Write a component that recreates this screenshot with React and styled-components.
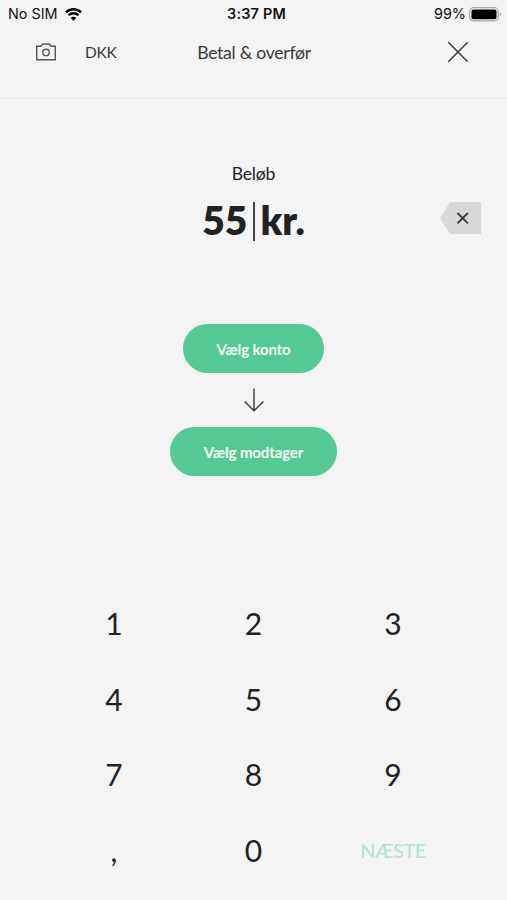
import React from "react";
import styled, { createGlobalStyle } from "styled-components";

const colors = {
  background: "#f4f4f4",
  text: "#222222",
  icon: "#3a3a3a",
  green: "#56c896",
  greenFaded: "#b0e4cc",
  border: "#e7e7e7",
  erase: "#d8d8d8",
};

const GlobalStyle = createGlobalStyle`
  * {
    box-sizing: border-box;
  }
  body {
    margin: 0;
    background-color: ${colors.background};
  }
  button {
    border: 0;
    padding: 0;
    background: none;
    color: inherit;
    font: inherit;
  }
  svg {
    display: block;
  }
`;

const Screen = styled.div`
  display: flex;
  flex-direction: column;
  height: 900px;
  overflow: hidden;
  background-color: ${colors.background};
  color: ${colors.text};
  font-family: Lato, sans-serif;
`;

const StatusBar = styled.div`
  display: grid;
  grid-template-columns: 1fr auto 1fr;
  align-items: center;
  height: 28px;
  padding: 0 5px 0 8px;
  font-family: Inter, sans-serif;
  font-size: 14.4px;
  line-height: 28px;
  color: #111111;
`;

const StatusGroup = styled.div`
  display: flex;
  align-items: center;
  justify-content: ${(props) => (props.$end ? "flex-end" : "flex-start")};
  gap: ${(props) => (props.$end ? "3px" : "7px")};
`;

const Clock = styled.div`
  padding-left: 3px;
  font-weight: 600;
  letter-spacing: 0.2px;
`;

const Header = styled.header`
  display: grid;
  grid-template-columns: 1fr auto 1fr;
  align-items: center;
  height: 71px;
  padding: 0 38px 22px 35px;
  border-bottom: 1px solid ${colors.border};
`;

const HeaderLeft = styled.div`
  display: flex;
  align-items: center;
  gap: 28px;
`;

const Currency = styled.button`
  font-size: 15.5px;
  letter-spacing: -0.3px;
  color: ${colors.icon};
`;

const Title = styled.h1`
  margin: 0;
  padding: 2px 0 0 4px;
  font-size: 17.6px;
  font-weight: 400;
  line-height: 24px;
  letter-spacing: -0.27px;
  color: ${colors.icon};
`;

const CloseButton = styled.button`
  justify-self: end;
`;

const AmountSection = styled.section`
  display: grid;
  grid-template-columns: 1fr auto 1fr;
  align-items: center;
  height: 225px;
  padding: 63px 26px 0 26px;
  grid-template-rows: 24px 64px;
`;

const AmountLabel = styled.div`
  grid-column: 1 / -1;
  text-align: center;
  font-size: 17.6px;
  line-height: 24px;
  letter-spacing: -0.2px;
`;

const Amount = styled.div`
  grid-column: 2;
  display: flex;
  align-items: center;
  padding-top: 3px;
  font-size: 39px;
  font-weight: 800;
  line-height: 48px;
`;

const Caret = styled.span`
  width: 2px;
  height: 39px;
  margin: 3px 5px 0 6px;
  background-color: #444444;
`;

const EraseButton = styled.button`
  justify-self: end;
`;

const Accounts = styled.section`
  display: flex;
  flex-direction: column;
  align-items: center;
  height: 261px;
`;

const PillButton = styled.button`
  height: 49px;
  padding: 0 33.5px;
  border-radius: 25px;
  background-color: ${colors.green};
  color: #f4fff9;
  font-size: 15px;
  font-weight: 700;
  line-height: 48px;
  letter-spacing: -0.13px;
`;

const ArrowWrapper = styled.div`
  display: flex;
  align-items: center;
  height: 54px;
`;

const Keypad = styled.div`
  display: grid;
  grid-template-columns: repeat(3, 139.5px);
  grid-template-rows: repeat(4, 75.7px);
  justify-content: center;
`;

const Key = styled.button`
  font-size: 30px;
`;

const NextKey = styled(Key)`
  font-size: 20px;
  letter-spacing: -0.5px;
  color: ${colors.greenFaded};
`;

const WifiIcon = () => (
  <svg width="17" height="13" viewBox="0 0 17 13" fill="none">
    <path d="M0.8 4.4a10.9 10.9 0 0 1 15.4 0" stroke="#000" strokeWidth="2.5" />
    <path d="M3.5 7.3a7.1 7.1 0 0 1 10 0" stroke="#000" strokeWidth="2.3" />
    <path d="M8.5 12.8 5.7 10a4 4 0 0 1 5.6 0z" fill="#000" />
  </svg>
);

const BatteryIcon = () => (
  <svg width="33" height="15" viewBox="0 0 33 15" fill="none">
    <rect x="0.7" y="0.7" width="28.6" height="13.2" rx="4" stroke="#a5a5a5" strokeWidth="1.2" />
    <rect x="2.5" y="2.4" width="25" height="9.8" rx="2" fill="#000" />
    <path d="M30.8 5.2c1.6.7 1.6 3.5 0 4.2z" fill="#a5a5a5" />
  </svg>
);

const CameraIcon = () => (
  <svg width="22" height="18" viewBox="0 0 22 18" fill="none" stroke="#555555" strokeWidth="1.4">
    <path d="M1.7 3.2h4.2L7.6 1h6.8l1.7 2.2h4.2v13.5H1.7z" />
    <circle cx="11" cy="9.4" r="3.2" />
  </svg>
);

const CloseIcon = () => (
  <svg width="22" height="22" viewBox="0 0 22 22" stroke={colors.icon} strokeWidth="1.5">
    <path d="M1.3 1.3l19.4 19.4M20.7 1.3 1.3 20.7" />
  </svg>
);

const EraseIcon = () => (
  <svg width="41" height="32" viewBox="0 0 41 32" fill="none">
    <path d="M10 0h31v32H10L0 16z" fill={colors.erase} />
    <path d="M17.5 11l10.4 10.4M27.9 11 17.5 21.4" stroke={colors.icon} strokeWidth="1.8" />
  </svg>
);

const ArrowDownIcon = () => (
  <svg width="20" height="24" viewBox="0 0 20 24" fill="none" stroke={colors.icon} strokeWidth="1.4">
    <path d="M10 0.5v22.3M0.6 13.4 10 22.8l9.4-9.4" />
  </svg>
);

const digits = ["1", "2", "3", "4", "5", "6", "7", "8", "9", ",", "0"];

const App = () => {
  return (
    <Screen>
      <GlobalStyle />
      <StatusBar>
        <StatusGroup>
          <span>No SIM</span>
          <WifiIcon />
        </StatusGroup>
        <Clock>3:37 PM</Clock>
        <StatusGroup $end>
          <span>99%</span>
          <BatteryIcon />
        </StatusGroup>
      </StatusBar>
      <Header>
        <HeaderLeft>
          <CameraIcon />
          <Currency>DKK</Currency>
        </HeaderLeft>
        <Title>Betal &amp; overfør</Title>
        <CloseButton aria-label="Luk">
          <CloseIcon />
        </CloseButton>
      </Header>
      <AmountSection>
        <AmountLabel>Beløb</AmountLabel>
        <Amount>
          <span>55</span>
          <Caret />
          <span>kr.</span>
        </Amount>
        <EraseButton aria-label="Slet">
          <EraseIcon />
        </EraseButton>
      </AmountSection>
      <Accounts>
        <PillButton>Vælg konto</PillButton>
        <ArrowWrapper>
          <ArrowDownIcon />
        </ArrowWrapper>
        <PillButton>Vælg modtager</PillButton>
      </Accounts>
      <Keypad>
        {digits.map((digit) => (
          <Key key={digit}>{digit}</Key>
        ))}
        <NextKey>NÆSTE</NextKey>
      </Keypad>
    </Screen>
  );
};

export default App;
